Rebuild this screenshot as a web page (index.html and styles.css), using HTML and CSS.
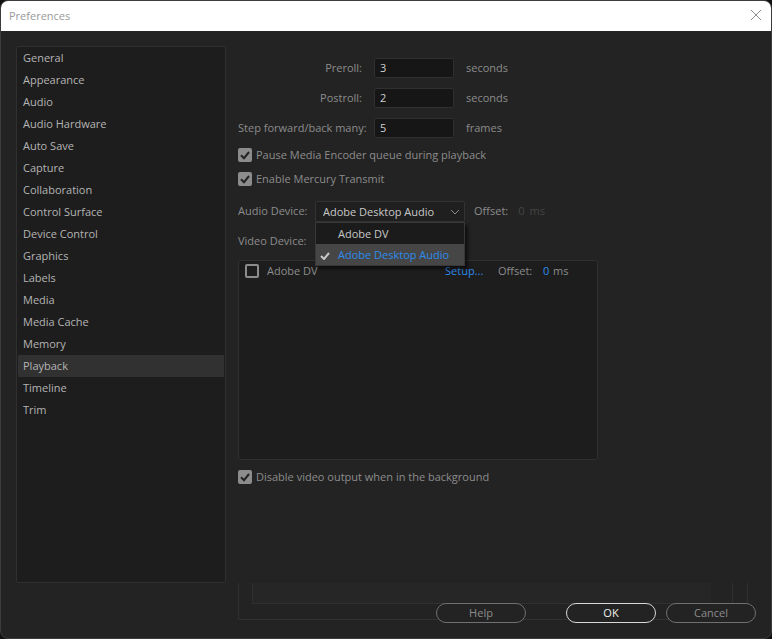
FILE: index.html
```html
<!DOCTYPE html>
<html lang="en">
<head>
<meta charset="utf-8">
<title>Preferences</title>
<link rel="stylesheet" href="styles.css">
</head>
<body>
<div class="dialog" role="dialog" aria-labelledby="title">
  <header class="titlebar">
    <h1 id="title">Preferences</h1>
    <button class="close" type="button" aria-label="Close">
      <svg width="12" height="12" viewBox="0 0 12 12"><path d="M1 1l10 10M11 1L1 11"/></svg>
    </button>
  </header>
  <div class="content">
    <nav class="sidebar">
      <a href="#">General</a>
      <a href="#">Appearance</a>
      <a href="#">Audio</a>
      <a href="#">Audio Hardware</a>
      <a href="#">Auto Save</a>
      <a href="#">Capture</a>
      <a href="#">Collaboration</a>
      <a href="#">Control Surface</a>
      <a href="#">Device Control</a>
      <a href="#">Graphics</a>
      <a href="#">Labels</a>
      <a href="#">Media</a>
      <a href="#">Media Cache</a>
      <a href="#">Memory</a>
      <a href="#" class="selected" aria-current="page">Playback</a>
      <a href="#">Timeline</a>
      <a href="#">Trim</a>
    </nav>
    <main class="panel">
      <div class="fields">
        <label for="preroll">Preroll:</label><input id="preroll" type="text" value="3"><span>seconds</span>
        <label for="postroll">Postroll:</label><input id="postroll" type="text" value="2"><span>seconds</span>
        <label for="step">Step forward/back many:</label><input id="step" type="text" value="5"><span>frames</span>
      </div>
      <div class="checks">
        <label class="check"><input type="checkbox" checked>Pause Media Encoder queue during playback</label>
        <label class="check"><input type="checkbox" checked>Enable Mercury Transmit</label>
      </div>
      <div class="device">
        <label class="device-label" for="audio">Audio Device:</label>
        <div class="dropdown">
          <select id="audio">
            <option>Adobe DV</option>
            <option selected>Adobe Desktop Audio</option>
          </select>
          <svg class="chevron" width="10" height="6" viewBox="0 0 10 6"><path d="M1 1l4 4 4-4"/></svg>
          <div class="menu">
            <button type="button">Adobe DV</button>
            <button type="button" class="active"><svg width="10" height="8" viewBox="0 0 10 8"><path d="M1 4l3 3 5-6"/></svg>Adobe Desktop Audio</button>
          </div>
        </div>
        <span class="offset">Offset:</span>
        <span class="disabled"><span>0</span><span>ms</span></span>
      </div>
      <div class="device">Video Device:</div>
      <div class="list">
        <div class="list-row">
          <label class="check"><input type="checkbox">Adobe DV</label>
          <a href="#">Setup...</a>
          <span class="list-offset">Offset:</span>
          <a href="#">0</a>
          <span>ms</span>
        </div>
      </div>
      <label class="check"><input type="checkbox" checked>Disable video output when in the background</label>
    </main>
  </div>
  <footer class="footer">
    <div class="frame"><div class="frame-inner"><div class="frame-fill"></div></div></div>
    <div class="buttons">
      <button type="button" class="help">Help</button>
      <button type="button" class="primary">OK</button>
      <button type="button">Cancel</button>
    </div>
  </footer>
</div>
</body>
</html>
```
FILE: styles.css
```css
* { box-sizing: border-box; }
body {
  margin: 0;
  background: #101010;
  color: #8c8c8c;
  font: 11px/20px "Open Sans", "Noto Sans", sans-serif;
}
a { color: #2d8ceb; text-decoration: none; }
button, input, select { font: inherit; }
svg { fill: none; stroke: currentColor; }
.dialog {
  display: flex;
  flex-direction: column;
  min-height: 100vh;
  background: #232323;
  border: 1px solid #3c3c3c;
  border-radius: 8px;
  overflow: hidden;
}
.titlebar {
  display: flex;
  align-items: center;
  justify-content: space-between;
  height: 30px;
  padding: 0 9px 0 8px;
  background: #fff;
  color: #999;
}
.titlebar h1 { margin: 0; font-size: 11px; font-weight: 400; }
.close { display: flex; padding: 0; margin-bottom: 2px; border: 0; background: none; color: #8e8e8e; }
.content {
  flex: 1;
  display: grid;
  grid-template-columns: 210px 1fr;
  gap: 12px;
  padding: 15px 15px 0;
}
.sidebar {
  padding: 0 1px;
  background: #1d1d1d;
  border: 1px solid #303030;
  border-radius: 2px;
}
.sidebar a { display: block; padding: 0 5px; line-height: 22px; color: #b4b4b4; }
.sidebar .selected { background: #313131; }
.panel { padding-top: 12px; }
.fields {
  display: grid;
  grid-template-columns: 124px 80px auto;
  column-gap: 12px;
  row-gap: 10px;
}
.fields label { text-align: right; white-space: nowrap; }
.fields input {
  width: 100%;
  height: 20px;
  padding: 0 5px;
  background: #161616;
  border: 1px solid #303030;
  border-radius: 2px;
  color: #d0d0d0;
}
.checks { display: grid; gap: 4px; margin: 7px 0 12px; }
.check { display: flex; align-items: center; gap: 4px; }
.check input {
  appearance: none;
  width: 14px;
  height: 14px;
  margin: 0;
  border: 2px solid #8c8c8c;
  border-radius: 2px;
}
.check input:checked {
  background: #8c8c8c url("data:image/svg+xml,%3Csvg xmlns='http://www.w3.org/2000/svg' viewBox='0 0 14 14'%3E%3Cpath d='M3 7.2l3 3L11 4' fill='none' stroke='%23232323' stroke-width='2'/%3E%3C/svg%3E") center / 14px 14px border-box;
}
.device { display: flex; margin-bottom: 9px; }
.device-label { width: 77px; }
.dropdown { position: relative; width: 150px; }
.dropdown select {
  display: block;
  appearance: none;
  width: 100%;
  height: 21px;
  padding: 0 7px;
  background: #1f1f1f;
  border: 1px solid #333;
  border-radius: 2px;
  color: #c8c8c8;
}
.chevron { position: absolute; right: 5px; top: 8px; }
.menu {
  position: absolute;
  z-index: 1;
  top: 21px;
  left: 0;
  right: 0;
  background: #1b1b1b;
  border: 1px solid #383838;
  box-shadow: 3px 3px 3px #0008;
}
.menu button {
  display: block;
  position: relative;
  width: 100%;
  height: 21px;
  padding: 0 22px;
  border: 0;
  background: none;
  color: #c8c8c8;
  text-align: left;
  white-space: nowrap;
}
.menu .active { background: #464646; color: #2d8ceb; }
.menu svg { position: absolute; left: 4px; top: 8px; stroke: #c8c8c8; stroke-width: 2; }
.offset { margin-left: 9px; }
.disabled { display: flex; gap: 5px; margin-left: 10px; color: #454545; }
.list {
  width: 360px;
  height: 200px;
  margin-bottom: 7px;
  padding: 0 6px;
  background: #1d1d1d;
  border: 1px solid #303030;
  border-radius: 2px;
}
.list-row {
  display: grid;
  grid-template-columns: 200px 53px 45px 10px auto;
}
.list .check { gap: 8px; }
.footer { display: grid; height: 55px; padding: 0 15px; }
.frame, .buttons { grid-area: 1 / 1; }
.frame {
  height: 37px;
  margin: 0 8px 0 222px;
  padding: 0 14px 0 13px;
  border: 1px solid #303030;
  border-top: 0;
}
.frame-inner { height: 21px; padding-right: 21px; border: 1px solid #303030; border-top: 0; }
.frame-fill { height: 20px; background: #262626; }
.buttons { display: flex; justify-content: flex-end; align-items: flex-start; gap: 10px; padding-top: 20px; }
.buttons button {
  width: 90px;
  height: 20px;
  padding: 0;
  border: 1px solid #707070;
  border-radius: 10px;
  background: #232323;
  color: #8c8c8c;
  line-height: 18px;
}
.buttons .help { margin-right: 30px; }
.buttons .primary { border-color: #d8d8d8; color: #f0f0f0; font-weight: 500; }
```
